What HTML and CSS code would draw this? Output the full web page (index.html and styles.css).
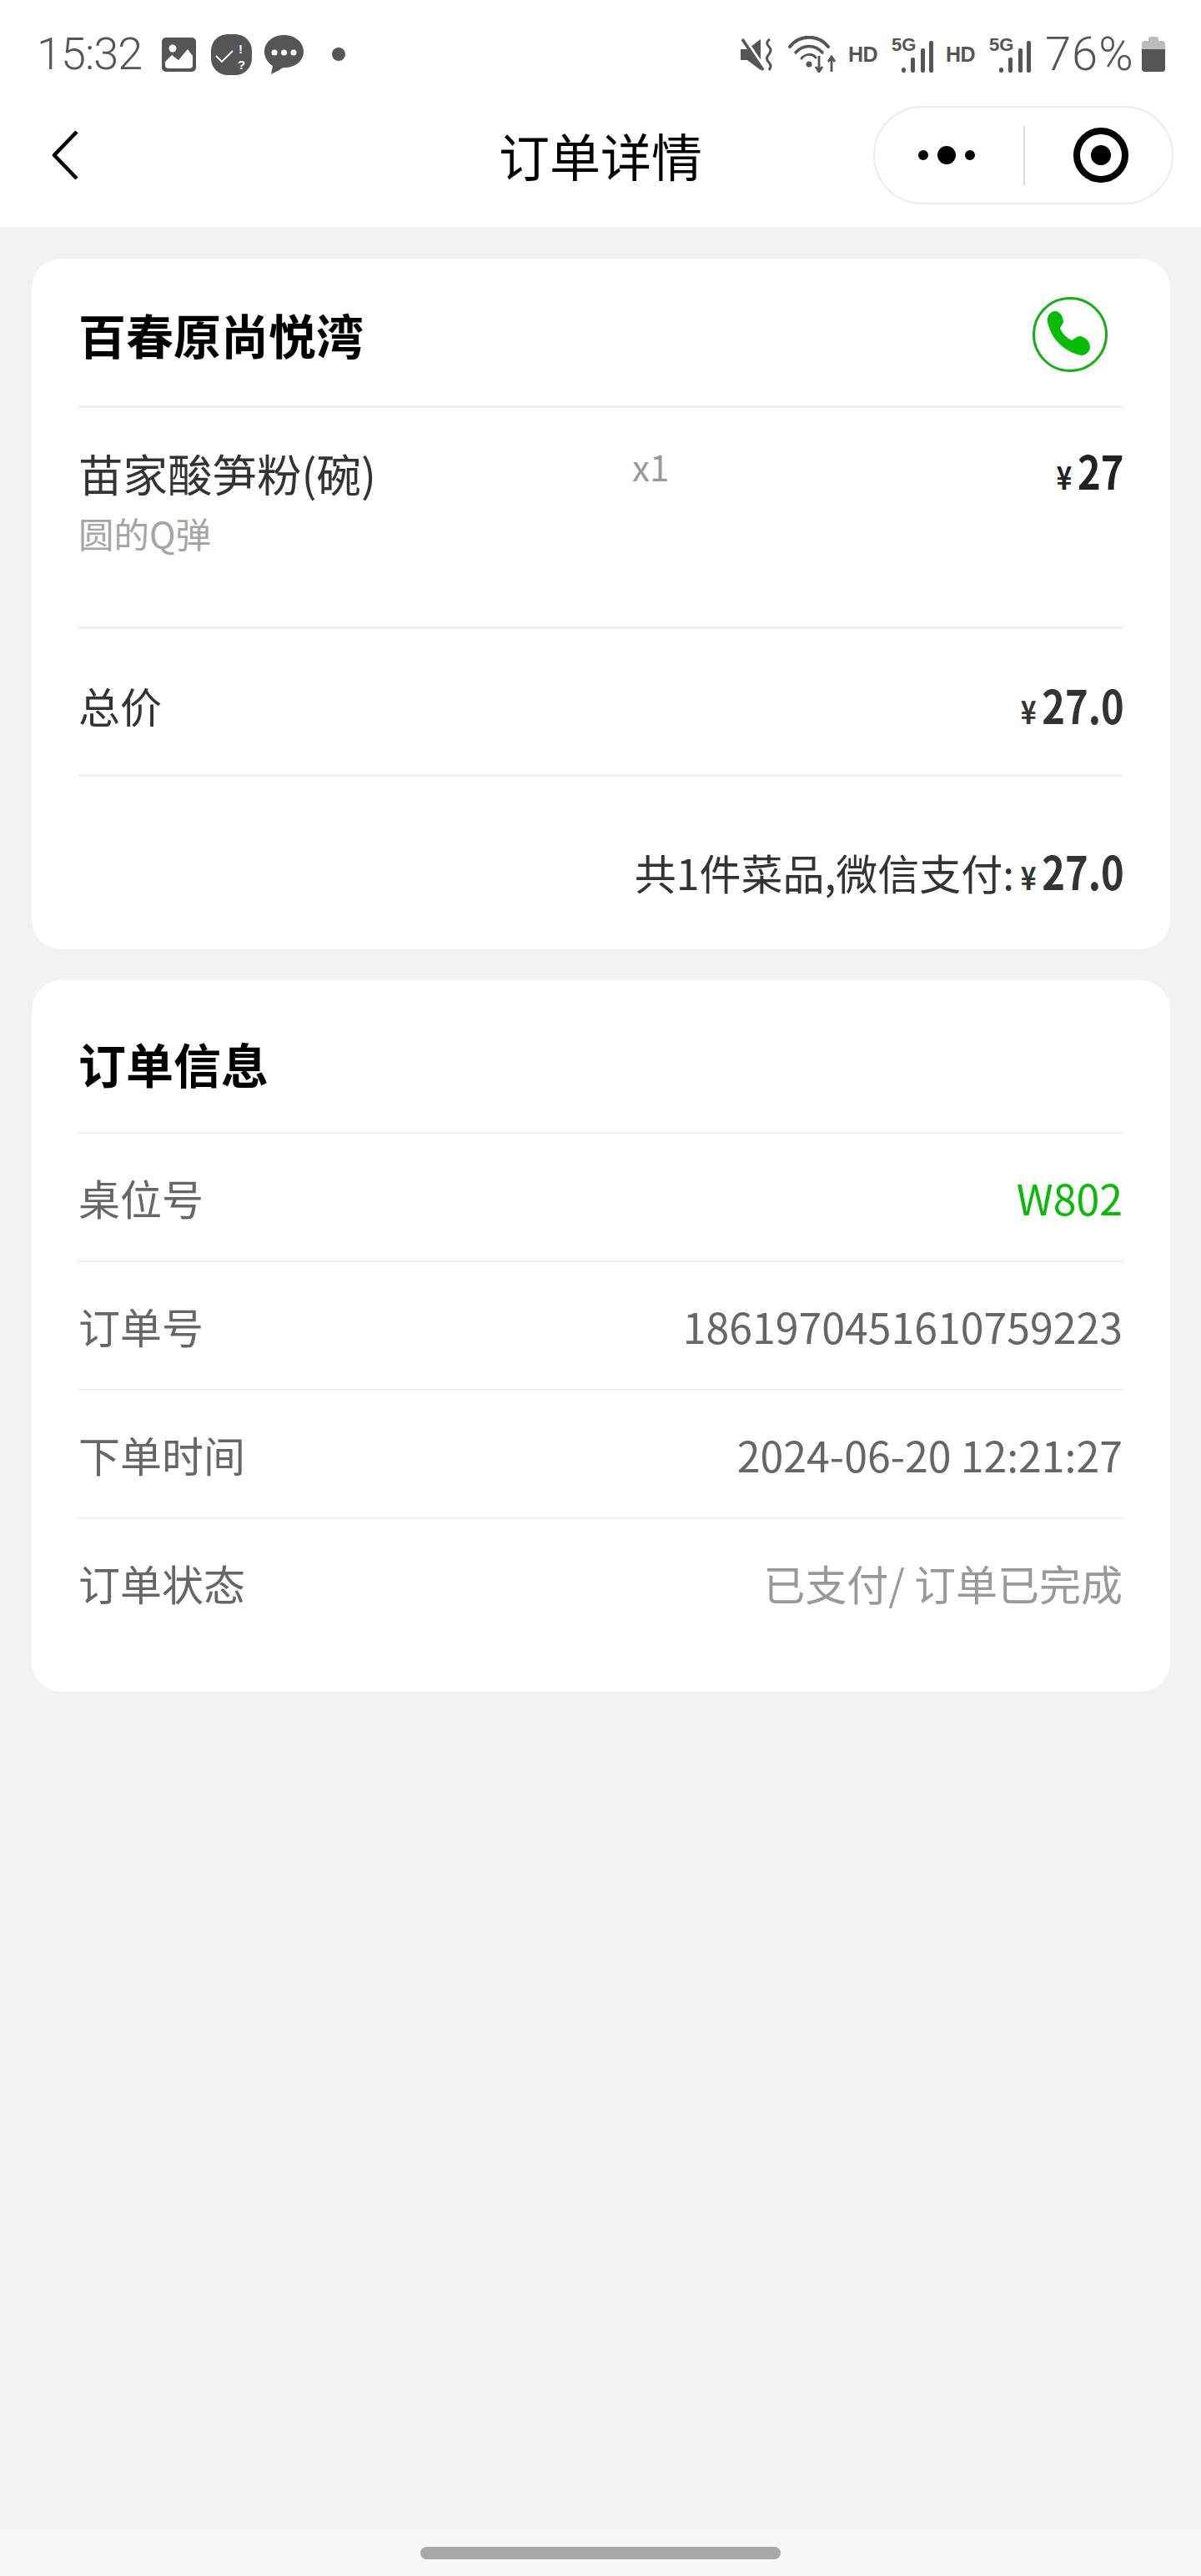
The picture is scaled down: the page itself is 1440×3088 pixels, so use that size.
FILE: index.html
```html
<!DOCTYPE html>
<html lang="zh-CN">
<head>
  <meta charset="UTF-8" />
  <meta name="viewport" content="width=device-width, initial-scale=1.0" />
  <title>订单详情</title>
  <link rel="stylesheet" href="styles.css">
</head>
<body>
  <div class="page">
    <div class="top">
      <div class="status">
        <div class="status-left">
          <span class="time">15:32</span>
          <svg class="ico-img" viewBox="0 0 41 41">
            <rect width="41" height="41" rx="5" fill="#555"/>
            <circle cx="13" cy="13" r="4.500" fill="#fff"/>
            <path d="M4 33V29L12 21L20 27L31 14L37 22V33Q37 37 33 37H8Q4 37 4 33Z" fill="#fff"/>
          </svg>
          <svg class="ico-check" viewBox="0 0 49 49">
            <rect width="49" height="49" rx="20" fill="#555"/>
            <path d="M6 26L13 33L26 20" fill="none" stroke="#fff" stroke-width="1.800"/>
            <text class="ico-mark" x="33" y="23">!</text>
            <text class="ico-mark" x="32" y="42">?</text>
          </svg>
          <svg class="ico-chat" viewBox="0 0 47 47">
            <path d="M23.500 0C36.500 0 47 8.500 47 20C47 31 37 39 24 39C22 39 20 40 18 42L8 47L10 37C4 33 0 27 0 20C0 8.500 10.500 0 23.500 0Z" fill="#555"/>
            <circle cx="12" cy="21" r="3.500" fill="#fff"/>
            <circle cx="23.500" cy="21" r="3.500" fill="#fff"/>
            <circle cx="35" cy="21" r="3.500" fill="#fff"/>
          </svg>
          <span class="status-dot"></span>
        </div>
        <div class="status-right">
          <svg class="ico-mute" viewBox="0 0 39 39">
            <path d="M0 13H8L24 1V38L8 26H0Z" fill="#555"/>
            <path d="M3 0L29 38" stroke="#fff" stroke-width="6"/>
            <path d="M2 1L27 38" stroke="#555" stroke-width="3.500"/>
            <path d="M35 1Q29 5 34 10Q38 14 34 19Q29 24 34 29Q38 33 34 38" fill="none" stroke="#555" stroke-width="3"/>
          </svg>
          <svg class="ico-wifi" viewBox="0 0 59 44">
            <g fill="none" stroke="#555" stroke-linecap="round">
              <path d="M2 13C14 -2 36 -2 48 13" stroke-width="4"/>
              <path d="M9 20C18 10 32 10 41 20" stroke-width="3.500"/>
              <path d="M16 27C21 21 29 21 33 26" stroke-width="3"/>
            </g>
            <circle cx="25" cy="34" r="3.500" fill="#555"/>
            <path d="M37 24V42M33 37L37 43L41 37M52 43V26M48 31L52 25L56 31" fill="none" stroke="#555" stroke-width="2.800"/>
          </svg>
          <span class="hd">HD</span>
          <svg class="ico-signal" viewBox="0 -4 50 47">
            <text class="sig-label" x="0" y="17">5G</text>
            <rect x="12" y="37" width="5" height="6" rx="2.500" fill="#555"/>
            <rect x="23" y="25" width="5" height="18" rx="2" fill="#555"/>
            <rect x="35" y="14" width="5" height="29" rx="2" fill="#555"/>
            <rect x="45" y="5" width="5" height="38" rx="2" fill="#555"/>
          </svg>
          <span class="hd hd-two">HD</span>
          <svg class="ico-signal" viewBox="0 -4 50 47">
            <text class="sig-label" x="0" y="17">5G</text>
            <rect x="12" y="37" width="5" height="6" rx="2.500" fill="#555"/>
            <rect x="23" y="25" width="5" height="18" rx="2" fill="#555"/>
            <rect x="35" y="14" width="5" height="29" rx="2" fill="#555"/>
            <rect x="45" y="5" width="5" height="38" rx="2" fill="#555"/>
          </svg>
          <span class="battery-text">76%</span>
          <svg class="ico-battery" viewBox="0 0 28 42">
            <path d="M8 3Q8 0 11 0H17Q20 0 20 3V5H24Q28 5 28 9V38Q28 42 24 42H4Q0 42 0 38V9Q0 5 4 5H8Z" fill="#bbb"/>
            <path d="M0 15H28V38Q28 42 24 42H4Q0 42 0 38Z" fill="#555"/>
          </svg>
        </div>
      </div>
      <div class="nav">
        <svg class="nav-back" viewBox="0 0 32 58">
          <path d="M30 1L3 29L30 57" fill="none" stroke="#000" stroke-width="4.500" stroke-linejoin="round"/>
        </svg>
        <div class="nav-title">订单详情</div>
        <div class="capsule">
          <div class="capsule-dots">
            <span class="dot"></span>
            <span class="dot dot-big"></span>
            <span class="dot"></span>
          </div>
          <span class="capsule-line"></span>
          <div class="capsule-target"><span></span></div>
        </div>
      </div>
    </div>

    <div class="content">
      <div class="card">
        <div class="shop">
          <h2 class="card-title">百春原尚悦湾</h2>
          <svg class="phone" viewBox="0 0 90 90">
            <circle cx="45" cy="45" r="43.500" fill="none" stroke="#1aad19" stroke-width="3"/>
            <path d="M18 30C17 22 22 17 27 17C32 17 36 22 37 29C37 33 33 35 33 38C36 44 41 49 47 52C50 51 52 47 57 47C63 48 69 53 69 60C69 66 63 70 59 70C38 66 22 50 18 30Z" fill="#09bb07"/>
          </svg>
        </div>
        <div class="item">
          <div class="item-info">
            <div class="item-name">苗家酸笋粉(碗)</div>
            <div class="item-desc">圆的Q弹</div>
          </div>
          <div class="item-qty">x1</div>
          <div class="price price-item"><span class="yen">¥</span>27</div>
        </div>
        <div class="total">
          <span>总价</span>
          <div class="price"><span class="yen">¥</span>27.0</div>
        </div>
        <div class="paid">
          <span>共1件菜品,微信支付:</span>
          <div class="price"><span class="yen">¥</span>27.0</div>
        </div>
      </div>

      <div class="card">
        <div class="info-head">
          <h2 class="card-title">订单信息</h2>
        </div>
        <div class="row">
          <span>桌位号</span>
          <span class="val-green">W802</span>
        </div>
        <div class="row">
          <span>订单号</span>
          <span>1861970451610759223</span>
        </div>
        <div class="row">
          <span>下单时间</span>
          <span>2024-06-20 12:21:27</span>
        </div>
        <div class="row">
          <span>订单状态</span>
          <span class="val-muted">已支付/ 订单已完成</span>
        </div>
      </div>
    </div>

    <div class="home-bar"><span></span></div>
  </div>
</body>
</html>
```

FILE: styles.css
```css
:root {
  --fondo: #f2f2f2;
  --linea: #f0f0f0;
  --icono: #555555;
  --verde: #09bb07;
}

* {
  box-sizing: border-box;
}

body {
  margin: 0;
  background: var(--fondo);
  font-family: "Noto Sans CJK SC", "Noto Sans", sans-serif;
}

.page {
  height: 3088px;
  display: flex;
  flex-direction: column;
  overflow: hidden;
}

.top {
  height: 272px;
  flex: none;
  background: #fff;
}

/* status bar */
.status {
  height: 100px;
  padding: 30px 43px 0 44px;
  display: flex;
  justify-content: space-between;
  align-items: center;
  color: var(--icono);
}

.status-left,
.status-right {
  display: flex;
  align-items: center;
}

.status svg {
  flex: none;
  display: block;
}

.time {
  font-family: Roboto, sans-serif;
  font-weight: 300;
  font-size: 54px;
  line-height: 70px;
  letter-spacing: -1px;
  width: 150px;
}

.ico-img {
  width: 41px;
  height: 41px;
  margin-top: 1px;
}

.ico-check {
  width: 49px;
  height: 49px;
  margin-left: 18px;
}

.ico-mark {
  font: 700 15px "Liberation Sans", sans-serif;
  fill: #fff;
}

.ico-chat {
  width: 47px;
  height: 47px;
  margin-left: 15px;
}

.status-dot {
  width: 16px;
  height: 16px;
  border-radius: 50%;
  background: var(--icono);
  margin-left: 34px;
}

.ico-mute {
  width: 39px;
  height: 39px;
}

.ico-wifi {
  width: 59px;
  height: 44px;
  margin-left: 18px;
}

.hd {
  font: 700 25px/30px "Liberation Sans", sans-serif;
  margin-left: 13px;
  width: 35px;
  letter-spacing: -0.5px;
}

.hd-two {
  margin-left: 15px;
}

.ico-signal {
  width: 50px;
  height: 47px;
  margin-left: 17px;
  margin-top: -4px;
}

.sig-label {
  font: 700 22px "Liberation Sans", sans-serif;
  fill: var(--icono);
}

.battery-text {
  font-family: Roboto, sans-serif;
  font-weight: 300;
  font-size: 56px;
  line-height: 70px;
  letter-spacing: 1px;
  margin-left: 17px;
  width: 116px;
}

.ico-battery {
  width: 28px;
  height: 42px;
}

/* title bar */
.nav {
  height: 172px;
  padding: 0 33px;
  display: grid;
  grid-template-columns: 1fr auto 1fr;
  align-items: center;
}

.nav-back {
  width: 32px;
  height: 58px;
  margin-left: 29px;
}

.nav-title {
  font-size: 61px;
  line-height: 80px;
  color: #000;
}

.capsule {
  justify-self: end;
  width: 360px;
  height: 118px;
  border: 2px solid #ececec;
  border-radius: 59px;
  display: flex;
  align-items: center;
  background: #fff;
}

.capsule-dots {
  width: 178px;
  padding-right: 6px;
  display: flex;
  justify-content: center;
  align-items: center;
  gap: 11px;
}

.dot {
  width: 12px;
  height: 12px;
  border-radius: 50%;
  background: #000;
}

.dot-big {
  width: 22px;
  height: 22px;
}

.capsule-line {
  width: 2px;
  height: 71px;
  background: #ddd;
}

.capsule-target {
  width: 66px;
  height: 66px;
  margin-left: 58px;
  border: 8px solid #000;
  border-radius: 50%;
  display: flex;
  justify-content: center;
  align-items: center;
}

.capsule-target span {
  width: 24px;
  height: 24px;
  border-radius: 50%;
  background: #000;
}

/* cards */
.content {
  flex: 1;
  padding: 38px 37px 0 38px;
  display: flex;
  flex-direction: column;
  gap: 37px;
}

.card {
  background: #fff;
  border-radius: 36px;
  padding: 0 57px 0 56px;
}

.card-title {
  margin: 0;
  font-size: 57px;
  line-height: 76px;
  font-weight: 700;
  color: #000;
}

.shop {
  height: 179px;
  padding: 4px 18px 0 0;
  display: flex;
  justify-content: space-between;
  align-items: center;
  border-bottom: 3px solid var(--linea);
}

.phone {
  width: 90px;
  height: 90px;
  margin-top: 2px;
}

.item {
  height: 265px;
  padding-top: 42px;
  display: flex;
  align-items: flex-start;
  border-bottom: 3px solid var(--linea);
}

.item-info {
  width: 664px;
}

.item-name {
  font-size: 53.500px;
  line-height: 72px;
  color: #333;
}

.item-desc {
  font-size: 42.500px;
  line-height: 56px;
  color: #a5a5a5;
  margin-top: 8px;
}

.item-qty {
  font-size: 42px;
  line-height: 60px;
  color: #999;
  margin-top: -2px;
}

/* the digits in the reference are a condensed cut */
.price {
  display: flex;
  align-items: baseline;
  font-size: 56px;
  line-height: 72px;
  font-weight: 700;
  color: #333;
  margin-right: -2px;
  transform: scaleX(0.84);
  transform-origin: right center;
}

.price-item {
  margin-left: auto;
  margin-top: -4px;
  color: #222;
}

.yen {
  font-size: 38px;
  margin-right: 8px;
}

.total {
  height: 177px;
  padding-top: 8px;
  display: flex;
  justify-content: space-between;
  align-items: center;
  font-size: 50px;
  color: #333;
  border-bottom: 3px solid var(--linea);
}

.total .price {
  margin-top: 6px;
}

.paid {
  height: 207px;
  padding-top: 76px;
  display: flex;
  justify-content: flex-end;
  align-items: baseline;
  font-size: 50px;
  line-height: 72px;
  color: #333;
}

.paid .price {
  margin-left: -16px;
}

.info-head {
  height: 182px;
  padding-top: 16px;
  display: flex;
  align-items: center;
}

.row {
  height: 154px;
  display: flex;
  justify-content: space-between;
  align-items: center;
  font-size: 50px;
  color: #666;
  border-top: 2px solid var(--linea);
}

.row:last-child {
  height: 209px;
  padding-bottom: 55px;
}

.val-green {
  color: var(--verde);
}

.val-muted {
  color: #999;
}

/* home indicator */
.home-bar {
  height: 56px;
  flex: none;
  background: #f7f7f7;
  padding-top: 21px;
  display: flex;
  justify-content: center;
  align-items: flex-start;
}

.home-bar span {
  width: 432px;
  height: 15px;
  border-radius: 8px;
  background: #a8a8a8;
}
```
